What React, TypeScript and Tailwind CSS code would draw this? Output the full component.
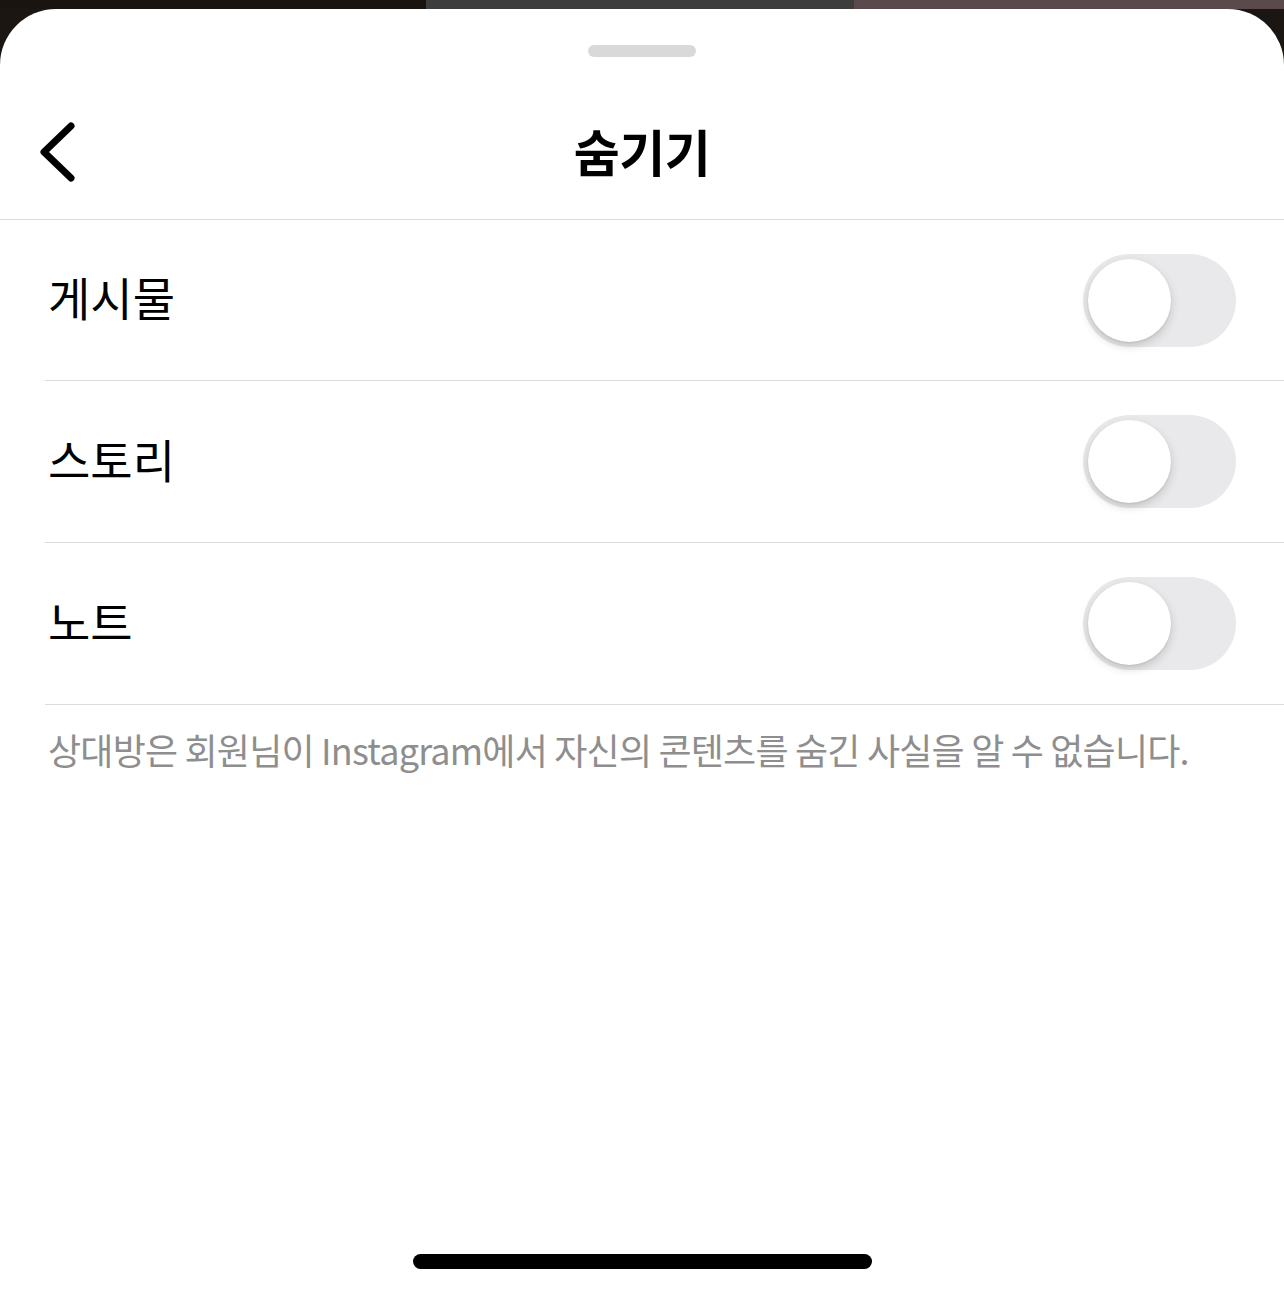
import { useState } from 'react'

const rows = ['게시물', '스토리', '노트']

function Toggle({ on, onClick }: { on: boolean; onClick: () => void }) {
  return (
    <button
      onClick={onClick}
      className={`relative w-[153px] h-[93px] rounded-full transition-colors ${on ? 'bg-[#34c759]' : 'bg-[#e9e9eb]'}`}
    >
      <span
        className={`absolute top-[5px] w-[83px] h-[83px] rounded-full bg-white shadow-[0_4px_10px_rgba(0,0,0,0.16),0_1px_2px_rgba(0,0,0,0.08)] transition-all ${on ? 'left-[65px]' : 'left-[5px]'}`}
      />
    </button>
  )
}

export default function App() {
  const [state, setState] = useState<{ [key: string]: boolean }>({})

  return (
    <div
      className="w-[1284px] h-[1292px] bg-[#1c1612] flex flex-col overflow-hidden"
      style={{ fontFamily: '"Noto Sans CJK KR", "Noto Sans", sans-serif' }}
    >
      {/* photos behind the sheet */}
      <div className="h-[9px] flex shrink-0">
        <div className="w-[426px] bg-[#1a1411]" />
        <div className="w-[428px] bg-[#3d3d3d]" />
        <div className="flex-1 bg-[#5a4a4c]" />
      </div>

      <div className="flex-1 bg-white rounded-t-[56px] flex flex-col">
        {/* Handle */}
        <div className="pt-[36px] flex justify-center">
          <div className="w-[108px] h-[12px] rounded-full bg-[#d9d9d9]" />
        </div>

        {/* Header */}
        <div className="relative h-[163px] pt-[24px] flex items-center justify-center border-b border-[#dbdbdb]">
          <button className="absolute left-[36px] top-[63px] w-[44px] h-[64px] flex items-center justify-center">
            <svg width="44" height="64" viewBox="0 0 44 64" fill="none">
              <polyline
                points="35,6 8,32 35,58"
                stroke="#000"
                strokeWidth="7"
                strokeLinecap="round"
                strokeLinejoin="round"
              />
            </svg>
          </button>
          <h1 className="text-[50px] leading-none font-semibold text-black tracking-[-0.5px]">숨기기</h1>
        </div>

        {/* Rows */}
        {rows.map((label, i) => (
          <div
            key={label}
            className={`ml-[45px] ${i === 0 ? 'h-[161px]' : 'h-[162px]'} border-b border-[#dbdbdb] flex items-center justify-between pl-[3px] pr-[48px]`}
          >
            <span className="text-[46px] text-black leading-none pb-[8px]">{label}</span>
            <Toggle on={!!state[label]} onClick={() => setState(prev => ({ ...prev, [label]: !prev[label] }))} />
          </div>
        ))}

        <p className="px-[48px] pt-[20px] text-[36px] leading-[48px] text-[#8e8e8e] tracking-[-0.8px] whitespace-nowrap">
          상대방은 회원님이 Instagram에서 자신의 콘텐츠를 숨긴 사실을 알 수 없습니다.
        </p>

        <div className="flex-1" />

        {/* Home indicator */}
        <div className="flex justify-center pb-[23px]">
          <div className="w-[459px] h-[15px] rounded-full bg-black" />
        </div>
      </div>
    </div>
  )
}
